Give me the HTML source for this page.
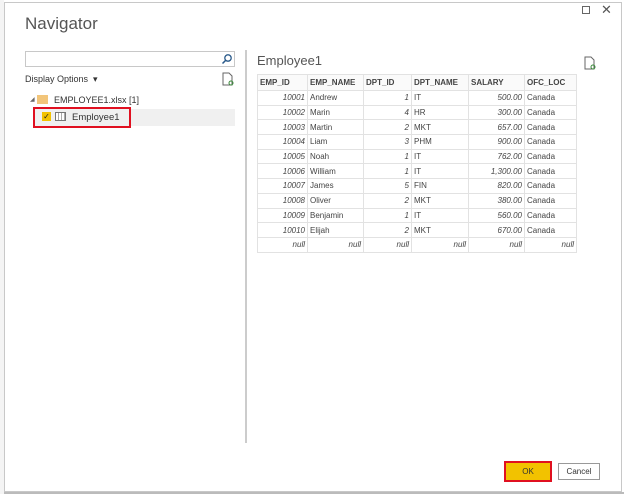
<!DOCTYPE html>
<html><head><style>
*{margin:0;padding:0;box-sizing:border-box}
body{width:624px;height:494px;background:#fff;font-family:"Liberation Sans",sans-serif;position:relative;overflow:hidden;color:#333}
.abs{position:absolute}
.dlg{left:4px;top:2px;width:618px;height:490px;border:1px solid #c8c8c8;background:#fff}
table{border-collapse:collapse;font-size:8px;color:#444}
td,th{border:1px solid #e2e2e2;height:14.7px;padding:0 2px;white-space:nowrap}
th{text-align:left;font-weight:bold;height:16px;background:#fafafa}
td.n{text-align:right;font-style:italic}
</style></head><body>
<div class="abs" style="left:0;top:0;width:4px;height:494px;background:#f4f4f4"></div>
<div class="abs dlg"></div>
<div class="abs" style="left:4px;top:492px;width:620px;height:2px;background:#bbb"></div>
<div class="abs" style="left:25px;top:14px;font-size:17px;color:#555">Navigator</div>
<div class="abs" style="left:582px;top:6px;width:8px;height:8px;border:1px solid #666"></div>
<div class="abs" style="left:601px;top:2px;font-size:13px;color:#555">✕</div>
<div class="abs" style="left:25px;top:51px;width:210px;height:16px;border:1px solid #c8c8c8"></div>
<svg class="abs" style="left:221px;top:53px" width="12" height="12"><circle cx="7" cy="5" r="3.2" fill="none" stroke="#2a5a8a" stroke-width="1.3"/><line x1="4.7" y1="7.3" x2="1.5" y2="10.5" stroke="#2a5a8a" stroke-width="1.5"/></svg>
<div class="abs" style="left:25px;top:74px;font-size:9px;color:#333">Display Options &nbsp;▾</div>
<svg class="abs" style="left:222px;top:72px" width="12" height="14"><path d="M1 1h6l3 3v9H1z" fill="none" stroke="#666"/><circle cx="9" cy="11" r="2" fill="none" stroke="#3a8a3a"/></svg>
<svg class="abs" style="left:584px;top:56px" width="12" height="14"><path d="M1 1h6l3 3v9H1z" fill="none" stroke="#666"/><circle cx="9" cy="11" r="2" fill="none" stroke="#3a8a3a"/></svg>
<div class="abs" style="left:30px;top:96px;font-size:6px;color:#666">◢</div>
<div class="abs" style="left:37px;top:95px;width:11px;height:9px;background:#f2c57a"></div>
<div class="abs" style="left:54px;top:95px;font-size:9px;color:#333">EMPLOYEE1.xlsx [1]</div>
<div class="abs" style="left:34px;top:109px;width:201px;height:17px;background:#f0f0f0"></div>
<div class="abs" style="left:33px;top:107px;width:98px;height:21px;border:2px solid #e01020"></div>
<div class="abs" style="left:42px;top:112px;width:9px;height:9px;background:#f2c200;font-size:8px;line-height:9px;text-align:center;color:#222">✓</div>
<div class="abs" style="left:55px;top:112px;width:11px;height:9px;border:1px solid #777;background:repeating-linear-gradient(90deg,#fff 0 2px,#aaa 2px 3px)"></div>
<div class="abs" style="left:72px;top:112px;font-size:9.5px;color:#333">Employee1</div>
<div class="abs" style="left:245px;top:50px;width:2px;height:393px;background:#ccc"></div>
<div class="abs" style="left:257px;top:53px;font-size:13px;color:#555">Employee1</div>
<table class="abs" style="left:257px;top:74px;width:320px">
<tr><th style="width:50px">EMP_ID</th><th style="width:56px">EMP_NAME</th><th style="width:48px">DPT_ID</th><th style="width:57px">DPT_NAME</th><th style="width:56px">SALARY</th><th>OFC_LOC</th></tr>
<tr><td class="n">10001</td><td>Andrew</td><td class="n">1</td><td>IT</td><td class="n">500.00</td><td>Canada</td></tr>
<tr><td class="n">10002</td><td>Marin</td><td class="n">4</td><td>HR</td><td class="n">300.00</td><td>Canada</td></tr>
<tr><td class="n">10003</td><td>Martin</td><td class="n">2</td><td>MKT</td><td class="n">657.00</td><td>Canada</td></tr>
<tr><td class="n">10004</td><td>Liam</td><td class="n">3</td><td>PHM</td><td class="n">900.00</td><td>Canada</td></tr>
<tr><td class="n">10005</td><td>Noah</td><td class="n">1</td><td>IT</td><td class="n">762.00</td><td>Canada</td></tr>
<tr><td class="n">10006</td><td>William</td><td class="n">1</td><td>IT</td><td class="n">1,300.00</td><td>Canada</td></tr>
<tr><td class="n">10007</td><td>James</td><td class="n">5</td><td>FIN</td><td class="n">820.00</td><td>Canada</td></tr>
<tr><td class="n">10008</td><td>Oliver</td><td class="n">2</td><td>MKT</td><td class="n">380.00</td><td>Canada</td></tr>
<tr><td class="n">10009</td><td>Benjamin</td><td class="n">1</td><td>IT</td><td class="n">560.00</td><td>Canada</td></tr>
<tr><td class="n">10010</td><td>Elijah</td><td class="n">2</td><td>MKT</td><td class="n">670.00</td><td>Canada</td></tr>
<tr><td class="n">null</td><td class="n">null</td><td class="n">null</td><td class="n">null</td><td class="n">null</td><td class="n">null</td></tr>
</table>
<div class="abs" style="left:504px;top:461px;width:48px;height:21px;border:2px solid #e01020;background:#f2c200;font-size:8px;text-align:center;line-height:17px;color:#333">OK</div>
<div class="abs" style="left:558px;top:463px;width:42px;height:17px;border:1px solid #999;background:#fff;font-size:8px;text-align:center;line-height:15px;color:#333">Cancel</div>
</body></html>
